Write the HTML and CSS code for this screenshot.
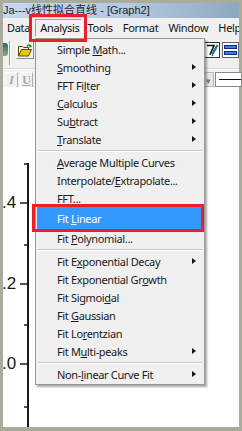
FILE: index.html
```html
<!DOCTYPE html>
<html lang="en">

<head>
    <meta charset="UTF-8">
    <meta name="viewport" content="width=device-width, initial-scale=1.0">
    <title>Graph2</title>
    <link rel="stylesheet" href="styles.css">
</head>

<body>
    <div class="screen">
        <div class="titlebar">Ja---v线性拟合直线 - [Graph2]</div>

        <div class="menubar">
            <span class="mb-item first">Data</span>
            <span class="mb-item active">Analysis</span>
            <span class="mb-item">Tools</span>
            <span class="mb-item">Format</span>
            <span class="mb-item">Window</span>
            <span class="mb-item">Help</span>
        </div>

        <div class="toolbar tb1">
            <div class="tb-group">
                <span class="cut-icon"></span>
                <span class="tb-sep"></span>
                <span class="tb-btn folder">
                    <svg width="15" height="13" viewBox="0 0 15 13">
                        <path d="M0.5 2.5h4l1 1h5v2" fill="none" stroke="#5a4a00" />
                        <path d="M0.5 2.5v9.5h10l3-6.5h-10l-3 6.5" fill="#e8c800" stroke="#5a4a00" stroke-linejoin="round" />
                        <path d="M9 2.5c1-2 3-2 4 0" fill="none" stroke="#1b8a2a" stroke-width="1.6" />
                        <path d="M12 0.5l2 2.5-3 0.5z" fill="#1b8a2a" />
                    </svg>
                </span>
            </div>
            <div class="tb-group right">
                <span class="tb-icon">
                    <svg width="16" height="16" viewBox="0 0 16 16">
                        <rect x="0.5" y="0.5" width="15" height="15" fill="#fff" stroke="#333" />
                        <path d="M3 3.5h7l-4 9.5" fill="none" stroke="#111" stroke-width="1.6" />
                        <path d="M13.5 3l-5 9" stroke="#13808f" stroke-width="2.4" />
                        <path d="M8.5 12l-1 2.5 2-1.5z" fill="#111" />
                    </svg>
                </span>
                <span class="tb-icon">
                    <svg width="17" height="16" viewBox="0 0 17 16">
                        <rect x="0.5" y="0.5" width="16" height="15" fill="#fff" stroke="#666" />
                        <rect x="2.5" y="3.5" width="12" height="3" fill="#3d7ee6" stroke="#0b2a86" />
                        <rect x="2.5" y="9.5" width="12" height="3" fill="#3d7ee6" stroke="#0b2a86" />
                    </svg>
                </span>
            </div>
        </div>

        <div class="toolbar tb2">
            <div class="tb-group">
                <span class="fmt-btn italic">I</span>
                <span class="fmt-btn under">U</span>
            </div>
            <div class="tb-group right">
                <span class="combo-arrow">▾</span>
                <span class="line-box"><span class="line-sample"></span></span>
            </div>
        </div>

        <div class="plot">
            <svg class="axis" width="40" height="340" viewBox="0 0 40 340">
                <path d="M25 76v264" stroke="#1a1a1a" stroke-width="2" />
                <path d="M21 77h5M17 116h9M21 158h5M17 197h9M21 238h5M17 277h9M21 320h5" stroke="#1a1a1a" stroke-width="1.5" />
            </svg>
            <span class="tick-label l4">.4</span>
            <span class="tick-label l2">.2</span>
            <span class="tick-label l0">.0</span>
        </div>

        <div class="dropdown">
            <div class="item"><span>Simple <u>M</u>ath...</span></div>
            <div class="item sub"><span><u>S</u>moothing</span><i class="arrow"></i></div>
            <div class="item sub"><span>FFT Fi<u>l</u>ter</span><i class="arrow"></i></div>
            <div class="item sub"><span><u>C</u>alculus</span><i class="arrow"></i></div>
            <div class="item sub"><span>Su<u>b</u>tract</span><i class="arrow"></i></div>
            <div class="item sub"><span><u>T</u>ranslate</span><i class="arrow"></i></div>
            <div class="sep"></div>
            <div class="item"><span><u>A</u>verage Multiple Curves</span></div>
            <div class="item"><span>Interpolate/<u>E</u>xtrapolate...</span></div>
            <div class="item"><span><u>F</u>FT...</span></div>
            <div class="item selected"><span>Fit <u>L</u>inear</span></div>
            <div class="item"><span>Fit <u>P</u>olynomial...</span></div>
            <div class="sep"></div>
            <div class="item sub"><span>Fit E<u>x</u>ponential Decay</span><i class="arrow"></i></div>
            <div class="item"><span>Fit Exponential Gr<u>o</u>wth</span></div>
            <div class="item"><span>Fit Sigmoi<u>d</u>al</span></div>
            <div class="item"><span>Fit <u>G</u>aussian</span></div>
            <div class="item"><span>Fit Lo<u>r</u>entzian</span></div>
            <div class="item sub"><span>Fit M<u>u</u>lti-peaks</span><i class="arrow"></i></div>
            <div class="sep"></div>
            <div class="item sub"><span>Non-<u>l</u>inear Curve Fit</span><i class="arrow"></i></div>
        </div>

        <div class="redbox rb-menu"></div>
        <div class="redbox rb-item"></div>
    </div>
</body>

</html>
```

FILE: styles.css
```css
* {
    margin: 0;
    padding: 0;
    box-sizing: border-box;
}

body {
    background: #a9ac9d;
    font-family: "Noto Sans", "Liberation Sans", sans-serif;
}

.screen {
    position: relative;
    width: 242px;
    height: 431px;
    background: #a9ac9d;
    padding: 3px 3px 4px 3px;
    display: flex;
    flex-direction: column;
    overflow: hidden;
}

.titlebar {
    height: 15px;
    line-height: 15px;
    font-size: 11px;
    color: #1d2530;
    white-space: nowrap;
    overflow: hidden;
    background: linear-gradient(to right, #c7d8ea, #b3c8de 55%, #8ea7c1);
    font-family: "Liberation Sans", "Noto Sans CJK SC", sans-serif;
}

.menubar {
    height: 20px;
    display: flex;
    align-items: center;
    background: #f0f0f0;
    font-size: 11px;
    letter-spacing: -0.3px;
    color: #111;
    white-space: nowrap;
    overflow: hidden;
}

.mb-item {
    padding: 0 5px;
    line-height: 16px;
}

.mb-item.first {
    padding: 0 5px 0 4px;
}

.mb-item.active {
    border: 1px solid;
    border-color: #a0a0a0 #fff #fff #a0a0a0;
    padding: 0 1px 0 4px;
    margin-right: 1px;
}

.toolbar {
    display: flex;
    justify-content: space-between;
    background: #f0f0f0;
}

.tb1 {
    height: 31px;
    padding-top: 3px;
    border-bottom: 1px solid #d8d8d8;
}

.tb2 {
    height: 18px;
    padding-top: 2px;
    border-top: 1px solid #fff;
}

.tb-group {
    display: flex;
    align-items: flex-start;
}

.cut-icon {
    width: 5px;
    height: 13px;
    margin-top: 2px;
    background: linear-gradient(#2d6a5a, #7fb07f);
    border-radius: 0 3px 3px 0;
}

.tb-sep {
    width: 2px;
    height: 24px;
    margin: 0 5px 0 1px;
    border-left: 1px solid #a0a0a0;
    border-right: 1px solid #fff;
}

.tb-btn {
    width: 18px;
    height: 18px;
    display: flex;
    align-items: center;
    justify-content: center;
    border: 1px solid;
    border-color: #fff #8a8a8a #8a8a8a #fff;
}

.tb-group.right {
    gap: 2px;
}

.tb-icon {
    display: flex;
    margin-top: 1px;
}

.fmt-btn {
    width: 13px;
    height: 16px;
    margin-left: 2px;
    font-family: "Liberation Serif", serif;
    font-size: 12px;
    font-weight: bold;
    color: #a8a8a8;
    text-align: center;
    line-height: 15px;
    border: 1px solid;
    border-color: #fff #b0b0b0 #b0b0b0 #fff;
}

.fmt-btn.italic {
    font-style: italic;
}

.fmt-btn.under {
    text-decoration: underline;
}

.combo-arrow {
    width: 11px;
    height: 15px;
    font-size: 9px;
    line-height: 15px;
    text-align: center;
    color: #777;
    border: 1px solid #b8b8b8;
    background: #e8e8e8;
}

.line-box {
    width: 27px;
    height: 15px;
    margin-left: -1px;
    margin-right: -3px;
    background: #fff;
    border: 1px solid #8a8a8a;
    display: flex;
    align-items: center;
    padding-left: 3px;
}

.line-sample {
    width: 100%;
    height: 1px;
    background: #111;
}

.plot {
    flex: 1;
    position: relative;
    background: #fff;
}

.axis {
    position: absolute;
    left: 0;
    top: 0;
}

.tick-label {
    position: absolute;
    left: -1px;
    font-family: "Liberation Sans", sans-serif;
    font-size: 17px;
    line-height: 17px;
    color: #1a1a1a;
}

.l4 {
    top: 107px;
}

.l2 {
    top: 188px;
}

.l0 {
    top: 268px;
}

.dropdown {
    position: absolute;
    left: 35px;
    top: 38px;
    width: 170px;
    padding: 1px;
    background: #f0f0f0;
    border: 1px solid #979797;
    box-shadow: 2px 2px 2px rgba(0, 0, 0, 0.35);
    font-size: 11px;
    letter-spacing: -0.35px;
    color: #1a1a1a;
}

.item {
    height: 18px;
    display: flex;
    align-items: center;
    justify-content: space-between;
    padding: 0 7px 0 20px;
    white-space: nowrap;
}

.item u {
    text-decoration-thickness: 1px;
    text-underline-offset: 1px;
}

.item.selected {
    height: 22px;
    background: #3399ff;
    color: #fff;
}

.arrow {
    width: 0;
    height: 0;
    border-top: 3.5px solid transparent;
    border-bottom: 3.5px solid transparent;
    border-left: 4px solid #111;
}

.sep {
    height: 5px;
    margin: 0 1px;
    padding-top: 2px;
}

.sep::before {
    content: "";
    display: block;
    height: 1px;
    background: #c9c9c9;
    border-bottom: 1px solid #fff;
    box-sizing: content-box;
}

.redbox {
    position: absolute;
    border: 3px solid #e8202a;
}

.rb-menu {
    left: 29px;
    top: 14px;
    width: 58px;
    height: 28px;
}

.rb-item {
    left: 32px;
    top: 204px;
    width: 172px;
    height: 28px;
}
```
